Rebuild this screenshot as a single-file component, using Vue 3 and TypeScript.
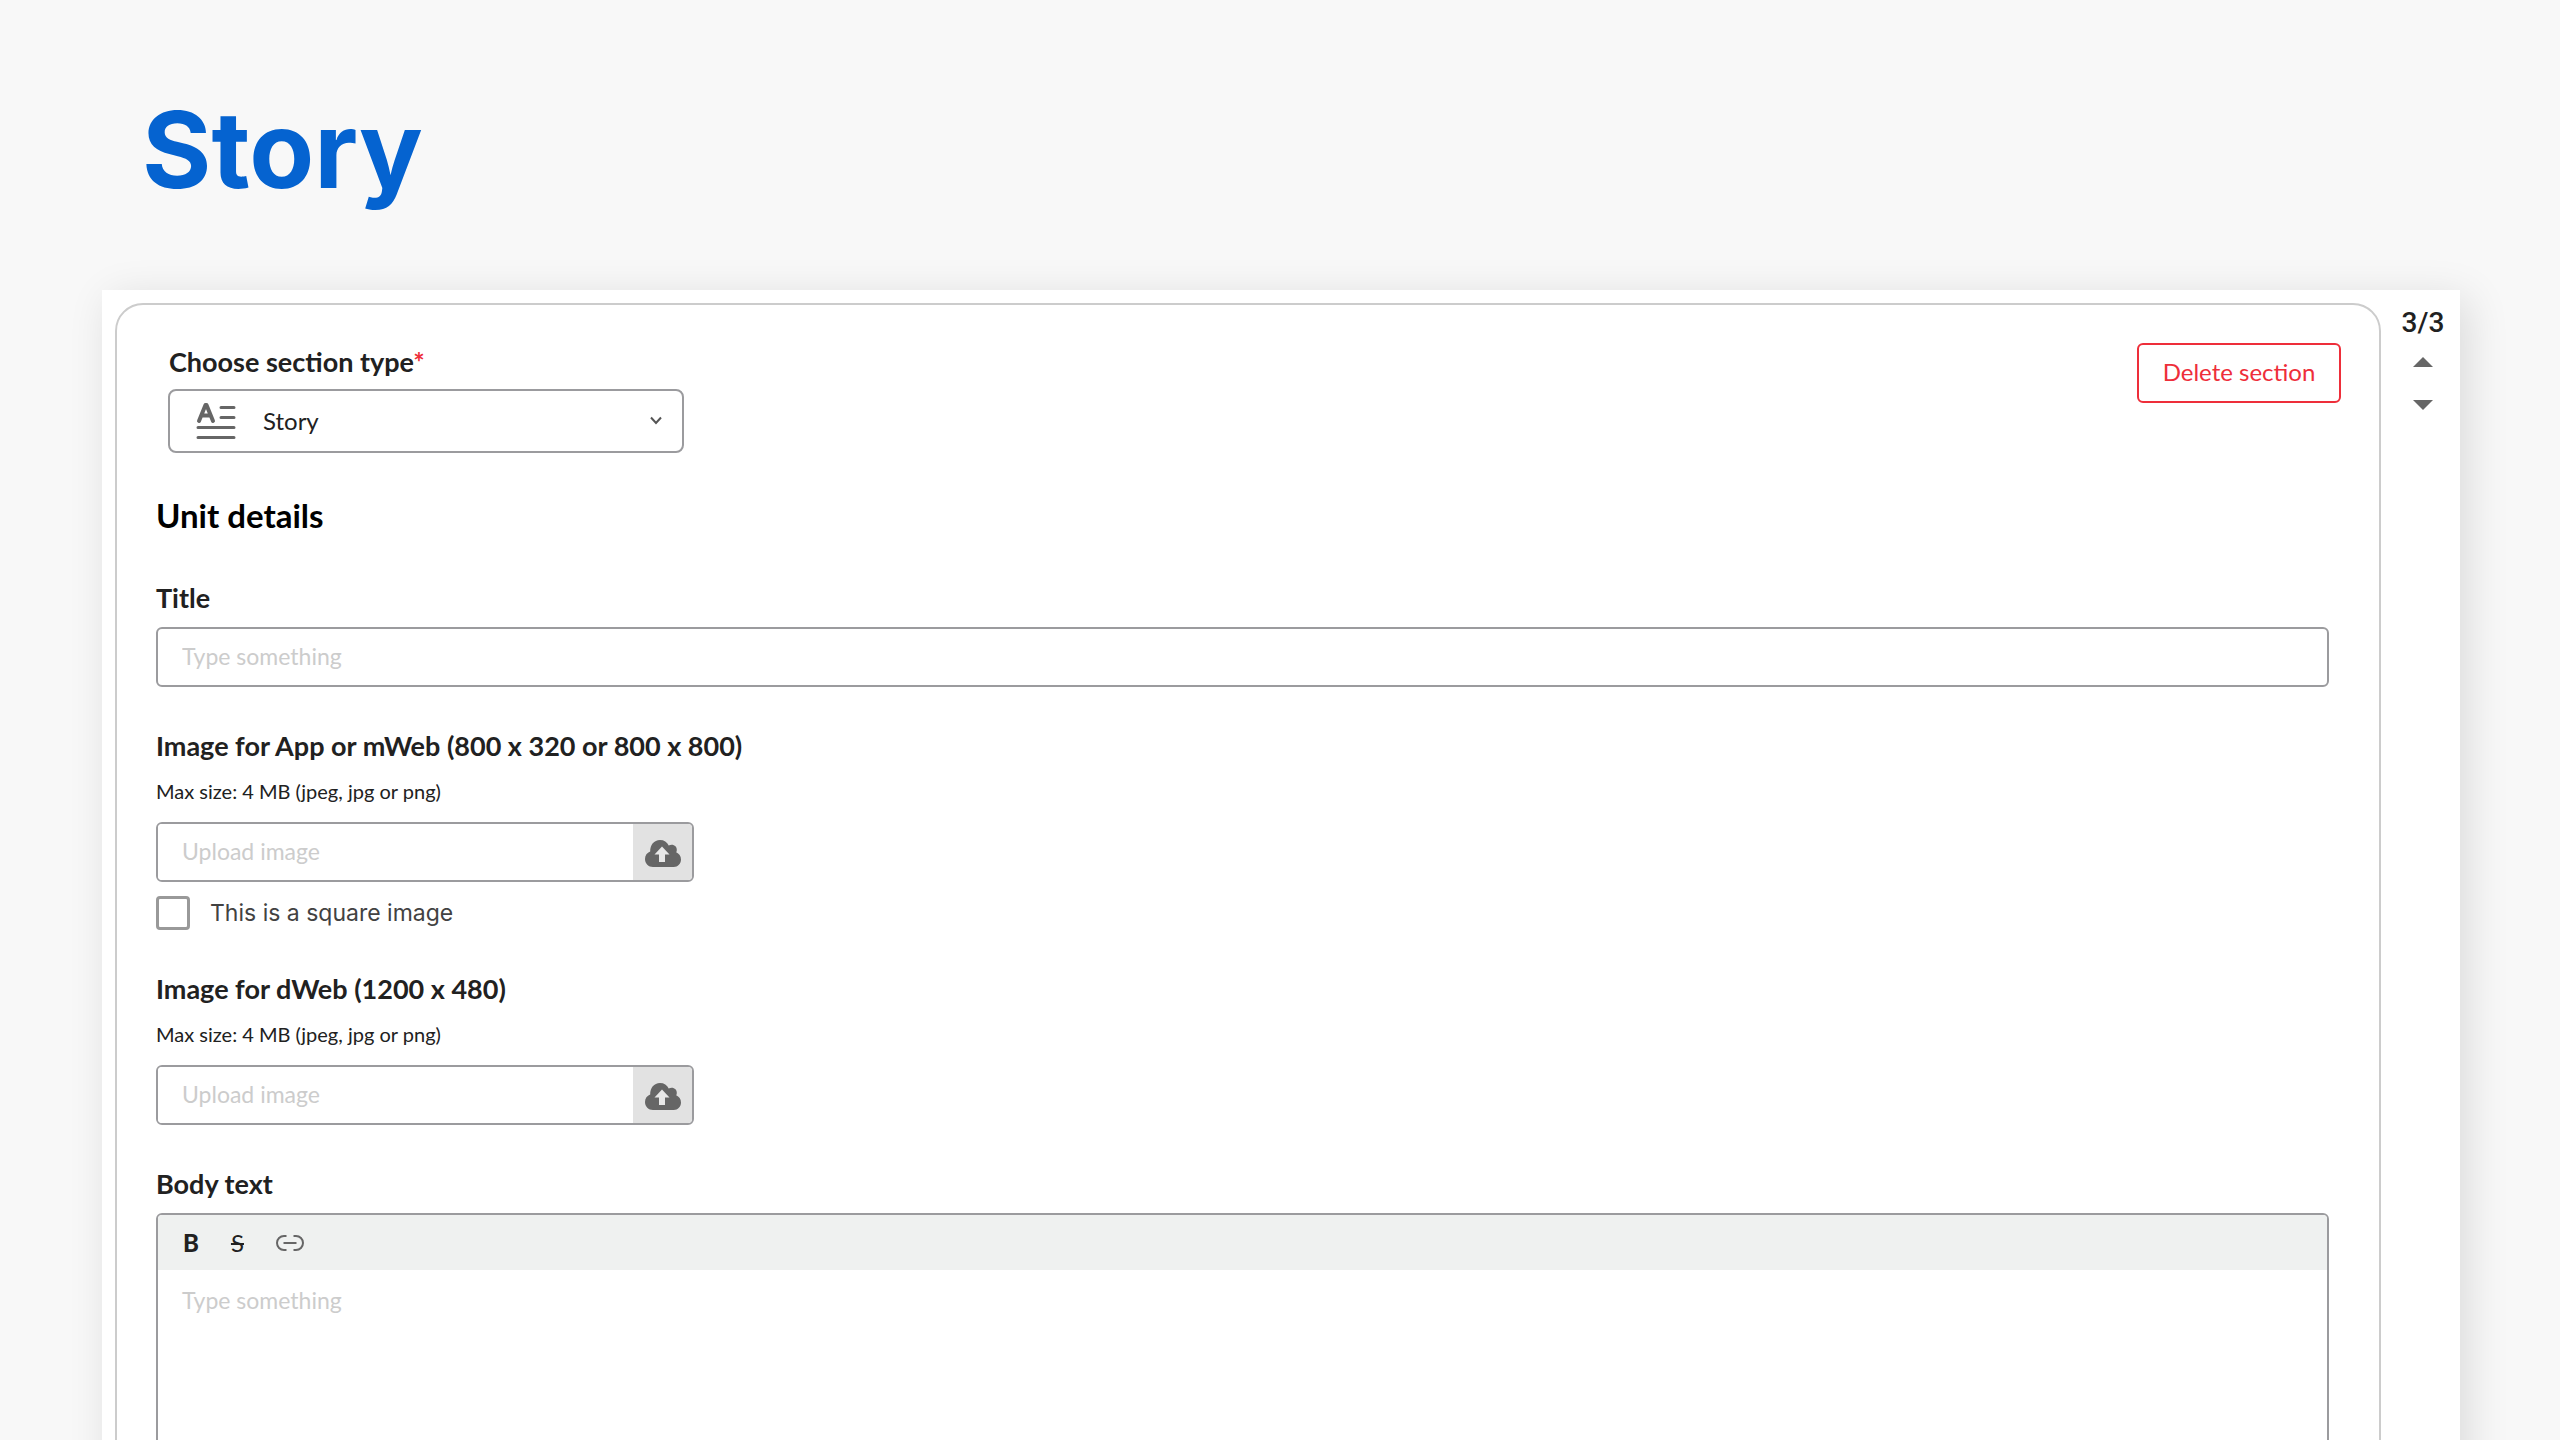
<script setup lang="ts">
import { ref } from 'vue'

interface UploadField {
  id: string
  label: string
  squareOption: boolean
}

const uploads: UploadField[] = [
  { id: 'app-image', label: 'Image for App or mWeb (800 x 320 or 800 x 800)', squareOption: true },
  { id: 'dweb-image', label: 'Image for dWeb (1200 x 480)', squareOption: false },
]

const sectionType = ref('Story')
const title = ref('')
const body = ref('')
const isSquare = ref(false)
</script>

<template>
  <main class="page">
    <h1 class="page-title">Story</h1>

    <div class="card">
      <form class="section" @submit.prevent>
        <header class="section-head">
          <div class="type-field">
            <label class="label type-label" for="section-type">Choose section type<span class="required">*</span></label>
            <div class="select-wrap">
              <select id="section-type" v-model="sectionType" class="select">
                <option>Story</option>
              </select>
              <svg class="type-icon" viewBox="0 0 40 38" aria-hidden="true">
                <path class="glyph" d="M3 19 9.500 3h1L17 19M5.500 13.500h9" />
                <path d="M25 5.500h13M25 15.500h13M2 25.500h36M2 35.500h36" />
              </svg>
              <svg class="chevron" viewBox="0 0 12 9" aria-hidden="true">
                <path d="M1 1.500 6 7l5-5.500" />
              </svg>
            </div>
          </div>
          <button type="button" class="delete">Delete section</button>
        </header>

        <h2 class="heading">Unit details</h2>

        <div class="field">
          <label class="label" for="title">Title</label>
          <input id="title" v-model="title" class="text-input" type="text" placeholder="Type something" />
        </div>

        <div v-for="item in uploads" :key="item.id" class="field">
          <label class="label" :for="item.id">{{ item.label }}</label>
          <p class="hint">Max size: 4 MB (jpeg, jpg or png)</p>
          <div class="upload">
            <input :id="item.id" class="upload-input" type="text" placeholder="Upload image" readonly />
            <button type="button" class="upload-button" aria-label="Upload image">
              <svg viewBox="0 0 36 27" aria-hidden="true">
                <path
                  class="cloud"
                  d="M8 27C3.500 27 0 23.500 0 19c0-3.600 2-6.300 5.200-7.500C5 5 9 0 15 0c4 0 7.200 2 8.700 5.500 1-.6 2-.8 3-.8 3 0 5.300 2.300 5.100 5.200 0 .9-.2 1.700-.6 2.400C34 13.500 36 16 36 19.500c0 4.300-3.200 7.500-7.200 7.500z"
                />
                <path class="arrow" d="M17 6.500 9.500 14.500H14V22h6v-7.500h4.500z" />
              </svg>
            </button>
          </div>
          <label v-if="item.squareOption" class="check">
            <input v-model="isSquare" type="checkbox" />
            <span>This is a square image</span>
          </label>
        </div>

        <div class="field">
          <label class="label" for="body">Body text</label>
          <div class="editor">
            <div class="toolbar">
              <button type="button" class="tool bold" aria-label="Bold">B</button>
              <button type="button" class="tool strike" aria-label="Strikethrough">S</button>
              <button type="button" class="tool" aria-label="Link">
                <svg viewBox="0 0 28 16" aria-hidden="true">
                  <path d="M10.500 1H8a7 7 0 0 0 0 14h2.500M17.500 1H20a7 7 0 0 1 0 14h-2.500M7.500 8h13" />
                </svg>
              </button>
            </div>
            <textarea id="body" v-model="body" class="editor-text" placeholder="Type something"></textarea>
          </div>
        </div>
      </form>

      <aside class="pager">
        <span class="count">3/3</span>
        <button type="button" class="move" aria-label="Move section up">
          <svg viewBox="0 0 20 10" aria-hidden="true"><path d="M0 10 10 0l10 10z" /></svg>
        </button>
        <button type="button" class="move" aria-label="Move section down">
          <svg viewBox="0 0 20 10" aria-hidden="true"><path d="M0 0h20L10 10z" /></svg>
        </button>
      </aside>
    </div>
  </main>
</template>

<style>
body {
  background: #f8f8f8;
}
</style>

<style scoped>
.page {
  box-sizing: border-box;
  height: 100vh;
  overflow: hidden;
  padding: 84px 100px 0 102px;
  color: #212121;
  font-family: Lato, sans-serif;
}

.page *,
.page *::before {
  box-sizing: border-box;
}

.page-title {
  margin: 0 0 74px;
  padding-left: 40px;
  color: #0563d0;
  font: 700 106px/132px Inter, sans-serif;
}

.card {
  display: flex;
  padding: 13px 13px 0;
  background: #fff;
  box-shadow: 8px 8px 40px rgba(0, 0, 0, 0.12);
}

.section {
  flex: 1;
  padding: 38px 50px 40px 39px;
  border: 2px solid #ccc;
  border-radius: 28px;
}

.section-head {
  display: flex;
  justify-content: space-between;
  align-items: flex-start;
  margin: 0 -12px 42px 12px;
}

.type-field {
  width: 516px;
  padding-top: 2px;
}

.label {
  display: block;
  font-size: 27px;
  font-weight: 700;
  line-height: 34px;
}

.type-label {
  padding-left: 1px;
}

.required {
  color: #ee2e3a;
}

.select-wrap {
  position: relative;
  margin-top: 10px;
}

.select {
  display: block;
  width: 100%;
  height: 64px;
  padding: 0 40px 1px 93px;
  border: 2px solid #9b9b9e;
  border-radius: 8px;
  appearance: none;
  background: #fff;
  color: #212121;
  font-family: inherit;
  font-size: 24px;
}

.type-icon {
  position: absolute;
  top: 13px;
  left: 28px;
  width: 40px;
  height: 38px;
  fill: none;
  stroke: #666;
  stroke-width: 3;
  stroke-linecap: round;
  stroke-linejoin: round;
  pointer-events: none;
}

.glyph {
  stroke-width: 4;
}

.chevron {
  position: absolute;
  top: 27px;
  right: 22px;
  width: 12px;
  height: 9px;
  fill: none;
  stroke: #555;
  stroke-width: 2;
  pointer-events: none;
}

.delete {
  width: 204px;
  height: 60px;
  padding: 0 0 3px;
  border: 2px solid #ee2e3a;
  border-radius: 6px;
  background: #fff;
  color: #ee2e3a;
  font-family: inherit;
  font-size: 24px;
}

.heading {
  margin: 0 0 46px;
  color: #000;
  font-size: 33px;
  font-weight: 700;
  line-height: 40px;
}

.field {
  margin-bottom: 42px;
}

.text-input {
  display: block;
  width: 100%;
  height: 60px;
  margin-top: 12px;
  padding: 0 24px 3px;
  border: 2px solid #9b9b9e;
  border-radius: 6px;
  font-family: inherit;
  font-size: 23px;
}

.page ::placeholder {
  color: #ccc;
  opacity: 1;
}

.hint {
  margin: 14px 0 17px;
  font-size: 20px;
  line-height: 28px;
}

.upload {
  display: flex;
  width: 538px;
  height: 60px;
  overflow: hidden;
  border: 2px solid #9b9b9e;
  border-radius: 6px;
}

.upload-input {
  flex: 1;
  min-width: 0;
  padding: 0 24px 3px;
  border: 0;
  font-family: inherit;
  font-size: 23px;
}

.upload-button {
  display: grid;
  place-items: center;
  width: 59px;
  padding: 2px 0 0;
  border: 0;
  background: #e2e2e2;
}

.upload-button svg {
  width: 36px;
  height: 27px;
}

.cloud {
  fill: #666;
}

.arrow {
  fill: #e8e8e8;
}

.check {
  display: flex;
  align-items: center;
  gap: 20px;
  margin-top: 14px;
  color: #424242;
  font: 23px/34px Inter, sans-serif;
}

.check input {
  width: 34px;
  height: 34px;
  margin: 0;
  border: 3px solid #999;
  border-radius: 4px;
  appearance: none;
  background: #fff;
}

.check input:checked {
  background: #999;
}

.editor {
  margin-top: 12px;
  overflow: hidden;
  border: 2px solid #9b9b9e;
  border-radius: 6px;
}

.toolbar {
  display: flex;
  align-items: center;
  gap: 32px;
  height: 55px;
  padding: 0 25px;
  background: #eff1f0;
}

.tool {
  padding: 0;
  border: 0;
  background: none;
  color: #212121;
  font-family: inherit;
  font-size: 24px;
  line-height: 32px;
}

.tool svg {
  display: block;
  width: 28px;
  height: 16px;
  fill: none;
  stroke: #666;
  stroke-width: 2;
}

.bold {
  font-weight: 900;
}

.strike {
  text-decoration: line-through;
}

.editor-text {
  display: block;
  width: 100%;
  height: 320px;
  padding: 14px 24px;
  border: 0;
  outline: 0;
  resize: none;
  font-family: inherit;
  font-size: 23px;
  line-height: 32px;
}

.pager {
  display: flex;
  flex-direction: column;
  align-items: center;
  width: 66px;
  padding-left: 18px;
}

.count {
  margin: 3px 0 7px;
  font: 500 28px/34px Roboto, sans-serif;
}

.move {
  height: 30px;
  margin-bottom: 13px;
  padding: 0;
  border: 0;
  background: none;
}

.move svg {
  display: block;
  width: 20px;
  height: 10px;
  fill: #666;
}
</style>
